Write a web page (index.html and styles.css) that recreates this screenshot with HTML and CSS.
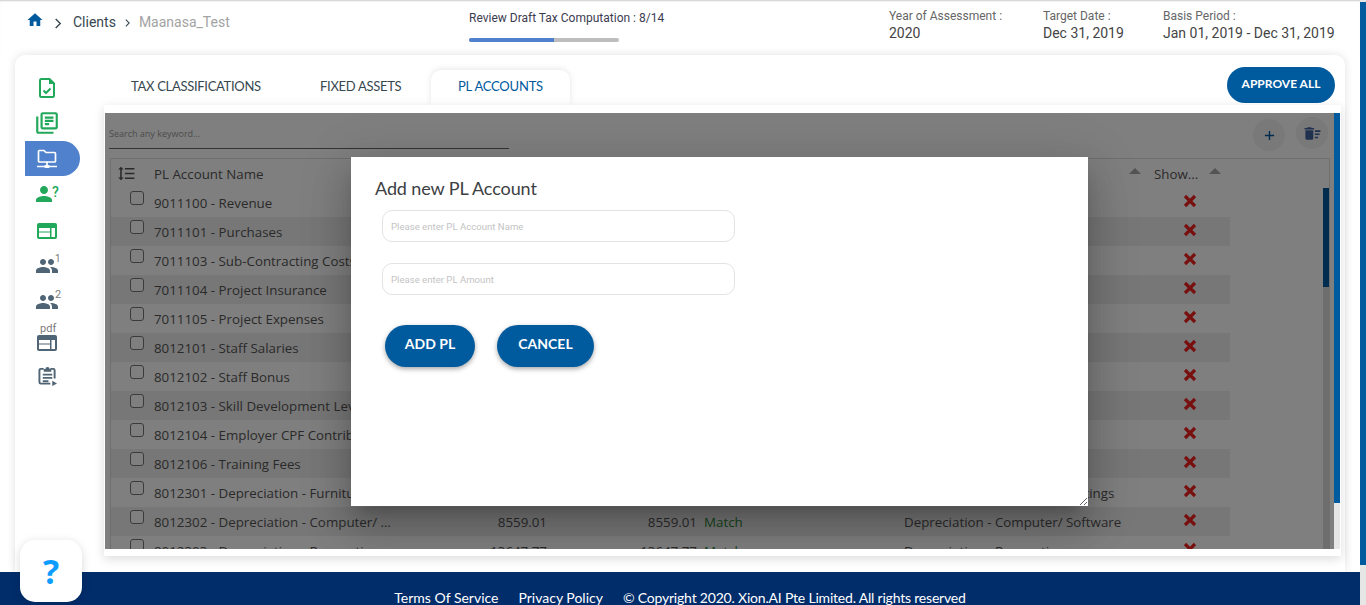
FILE: index.html
```html
<!DOCTYPE html>
<html lang="en">
<head>
<meta charset="utf-8">
<title>PL Accounts</title>
<link rel="stylesheet" href="styles.css">
</head>
<body>
<div class="app">
  <header class="topbar">
    <nav class="crumbs">
      <svg class="home" viewBox="0 0 24 24"><path d="M10 20v-6h4v6h5v-8h3L12 3 2 12h3v8z"/></svg>
      <svg class="chev big" viewBox="0 0 8 12"><path d="M1.5 1l5 5-5 5"/></svg>
      <span class="crumb">Clients</span>
      <svg class="chev small" viewBox="0 0 8 12"><path d="M1.5 1l5 5-5 5"/></svg>
      <span class="crumb muted">Maanasa_Test</span>
    </nav>
    <div class="progress">
      <div class="progress-label">Review Draft Tax Computation : 8/14</div>
      <div class="bar"><div class="bar-fill"></div></div>
    </div>
    <div class="meta m1"><div class="meta-label">Year of Assessment :</div><div class="meta-value">2020</div></div>
    <div class="meta m2"><div class="meta-label">Target Date :</div><div class="meta-value">Dec 31, 2019</div></div>
    <div class="meta m3"><div class="meta-label">Basis Period :</div><div class="meta-value">Jan 01, 2019 - Dec 31, 2019</div></div>
  </header>

  <main class="card">
    <aside class="sidebar">
      <div class="side-item">
        <svg class="ic-file" viewBox="0 0 16 20"><path class="g-stroke" d="M2.5 1h8L15 5.500V17.500a1.500 1.500 0 0 1-1.500 1.500h-11a1.500 1.500 0 0 1-1.500-1.500V2.500A1.500 1.500 0 0 1 2.500 1z"/><path class="g-fill" d="M10 1l5 5h-5z"/><path class="g-stroke" d="M4.500 12.500l2.500 2.500 4.500-4.500"/></svg>
      </div>
      <div class="side-item">
        <svg class="ic-books" viewBox="0 0 24 24"><path class="g-fill" d="M4 6H2v14c0 1.100.9 2 2 2h14v-2H4V6zm16-4H8c-1.100 0-2 .9-2 2v12c0 1.100.9 2 2 2h12c1.100 0 2-.9 2-2V4c0-1.100-.9-2-2-2zm0 14H8V4h12v12zM10 9h8v2h-8zm0 3h4v2h-4zm0-6h8v2h-8z"/></svg>
      </div>
      <div class="side-item active">
        <svg class="ic-net" viewBox="0 0 20 20"><path class="w-stroke" d="M2 1.500h5l2 2h8.500a1 1 0 0 1 1 1V12a1 1 0 0 1-1 1h-15a1 1 0 0 1-1-1V2.500a1 1 0 0 1 1-1z"/><path class="w-stroke" d="M10 13v3M0 17.500h20"/><rect class="w-fill" x="7.500" y="16" width="5" height="3" rx="1"/></svg>
      </div>
      <div class="side-item gap2">
        <svg class="ic-person" viewBox="4 4 16 16"><path class="g-fill" d="M12 12c2.210 0 4-1.790 4-4s-1.790-4-4-4-4 1.790-4 4 1.790 4 4 4zm0 2c-2.670 0-8 1.340-8 4v2h16v-2c0-2.660-5.330-4-8-4z"/></svg>
        <span class="sup green">?</span>
      </div>
      <div class="side-item">
        <svg class="ic-web" viewBox="0 0 20 16"><rect class="g-fill" width="20" height="16" rx="2"/><path class="w-fill" d="M2 5h11v3.500H2zM2 9.500h11V14H2zM14.500 5H18v9h-3.500z"/></svg>
      </div>
      <div class="side-item">
        <svg class="ic-people" viewBox="1 5 22 14"><path class="s-fill" d="M16 11c1.660 0 2.990-1.340 2.990-3S17.660 5 16 5c-1.660 0-3 1.340-3 3s1.340 3 3 3zm-8 0c1.660 0 2.990-1.340 2.990-3S9.660 5 8 5C6.340 5 5 6.340 5 8s1.340 3 3 3zm0 2c-2.330 0-7 1.170-7 3.500V19h14v-2.500c0-2.330-4.670-3.500-7-3.500zm8 0c-.29 0-.62.020-.97.050 1.160.84 1.970 1.970 1.970 3.450V19h6v-2.500c0-2.330-4.670-3.500-7-3.500z"/></svg>
        <span class="sup gray">1</span>
      </div>
      <div class="side-item second-team">
        <svg class="ic-people" viewBox="1 5 22 14"><path class="s-fill" d="M16 11c1.660 0 2.990-1.340 2.990-3S17.660 5 16 5c-1.660 0-3 1.340-3 3s1.340 3 3 3zm-8 0c1.660 0 2.990-1.340 2.990-3S9.660 5 8 5C6.340 5 5 6.340 5 8s1.340 3 3 3zm0 2c-2.330 0-7 1.170-7 3.500V19h14v-2.500c0-2.330-4.670-3.500-7-3.500zm8 0c-.29 0-.62.020-.97.050 1.160.84 1.970 1.970 1.970 3.450V19h6v-2.500c0-2.330-4.670-3.500-7-3.500z"/></svg>
        <span class="sup gray">2</span>
      </div>
      <div class="side-item pdf">
        <span class="pdf-label">pdf</span>
        <svg class="ic-web" viewBox="0 0 20 16"><rect class="s-fill" width="20" height="16" rx="2"/><path class="w-fill" d="M2 5h11v3.500H2zM2 9.500h11V14H2zM14.500 5H18v9h-3.500z"/></svg>
      </div>
      <div class="side-item last">
        <svg class="ic-clip" viewBox="0 0 20 21"><path class="s-stroke" d="M13 3h3a1.500 1.500 0 0 1 1.500 1.500V13M6 3H3A1.500 1.500 0 0 0 1.500 4.500V17A1.500 1.500 0 0 0 3 18.500h10"/><path class="s-fill" d="M6 3.200h1.800a2.200 2.200 0 0 1 4.400 0H14V6H6zM5 8h10v2H5zM5 11.500h10v2H5zM5 15h6v2H5zM15 15.500l5 3-5 2.500z"/></svg>
      </div>
    </aside>

    <section class="content">
      <div class="tabbar">
        <span class="tab t1">TAX CLASSIFICATIONS</span>
        <span class="tab t2">FIXED ASSETS</span>
        <span class="tab active">PL ACCOUNTS</span>
        <button class="approve">APPROVE ALL</button>
      </div>

      <div class="sheet">
        <div class="pane">
          <div class="toolbar">
            <div class="search">Search any keyword...</div>
            <span class="round plus"><svg viewBox="0 0 12 12"><path d="M6 1v10M1 6h10"/></svg></span>
            <span class="round bin"><svg viewBox="0 0 24 24"><path d="M15 16h4v2h-4zm0-8h7v2h-7zm0 4h6v2h-6zM3 18c0 1.100.9 2 2 2h6c1.100 0 2-.9 2-2V8H3v10zM14 5h-3l-1-1H6L5 5H2v2h12z"/></svg></span>
          </div>
          <div class="tablebox">
            <div class="thead">
              <svg class="sorter" viewBox="0 0 24 24"><path d="M6 7h2.500L5 3.500 1.500 7H4v10H1.500L5 20.500 8.500 17H6V7zm4-2v2h12V5H10zm0 14h12v-2H10v2zm0-6h12v-2H10v2z"/></svg>
              <span class="th-name">PL Account Name</span>
              <span class="tri"></span>
              <span class="th-show">Show...</span>
              <span class="tri"></span>
            </div>
            <div class="tbody">
              <div class="rows">
                <div class="row"><span class="check"></span><span class="name">9011100 - Revenue</span><svg class="x" viewBox="0 0 14 14"><path d="M2 2l10 10M12 2L2 12"/></svg></div>
                <div class="row"><span class="check"></span><span class="name">7011101 - Purchases</span><svg class="x" viewBox="0 0 14 14"><path d="M2 2l10 10M12 2L2 12"/></svg></div>
                <div class="row"><span class="check"></span><span class="name">7011103 - Sub-Contracting Costs</span><svg class="x" viewBox="0 0 14 14"><path d="M2 2l10 10M12 2L2 12"/></svg></div>
                <div class="row"><span class="check"></span><span class="name">7011104 - Project Insurance</span><svg class="x" viewBox="0 0 14 14"><path d="M2 2l10 10M12 2L2 12"/></svg></div>
                <div class="row"><span class="check"></span><span class="name">7011105 - Project Expenses</span><svg class="x" viewBox="0 0 14 14"><path d="M2 2l10 10M12 2L2 12"/></svg></div>
                <div class="row"><span class="check"></span><span class="name">8012101 - Staff Salaries</span><svg class="x" viewBox="0 0 14 14"><path d="M2 2l10 10M12 2L2 12"/></svg></div>
                <div class="row"><span class="check"></span><span class="name">8012102 - Staff Bonus</span><svg class="x" viewBox="0 0 14 14"><path d="M2 2l10 10M12 2L2 12"/></svg></div>
                <div class="row"><span class="check"></span><span class="name">8012103 - Skill Development Levy</span><svg class="x" viewBox="0 0 14 14"><path d="M2 2l10 10M12 2L2 12"/></svg></div>
                <div class="row"><span class="check"></span><span class="name">8012104 - Employer CPF Contribution</span><svg class="x" viewBox="0 0 14 14"><path d="M2 2l10 10M12 2L2 12"/></svg></div>
                <div class="row"><span class="check"></span><span class="name">8012106 - Training Fees</span><svg class="x" viewBox="0 0 14 14"><path d="M2 2l10 10M12 2L2 12"/></svg></div>
                <div class="row"><span class="check"></span><span class="name">8012301 - Depreciation - Furniture &amp; Fittings</span><span class="num"></span><span class="num n2"></span><span class="status"></span><span class="cls">Depreciation - Furniture &amp; Fittings</span><svg class="x" viewBox="0 0 14 14"><path d="M2 2l10 10M12 2L2 12"/></svg></div>
                <div class="row"><span class="check"></span><span class="name">8012302 - Depreciation - Computer/ Software</span><span class="num">8559.01</span><span class="num n2">8559.01</span><span class="status">Match</span><span class="cls">Depreciation - Computer/ Software</span><svg class="x" viewBox="0 0 14 14"><path d="M2 2l10 10M12 2L2 12"/></svg></div>
                <div class="row"><span class="check"></span><span class="name">8012303 - Depreciation - Renovation</span><span class="num">13647.77</span><span class="num n2">13647.77</span><span class="status">Match</span><span class="cls">Depreciation - Renovation</span><svg class="x" viewBox="0 0 14 14"><path d="M2 2l10 10M12 2L2 12"/></svg></div>
              </div>
              <div class="inner-scroll"><div class="inner-thumb"></div></div>
            </div>
          </div>

          <div class="dim">
            <div class="dialog">
              <h2 class="dialog-title">Add new PL Account</h2>
              <div class="field">Please enter PL Account Name</div>
              <div class="field second">Please enter PL Amount</div>
              <div class="actions">
                <button class="pill add">ADD PL</button>
                <button class="pill cancel">CANCEL</button>
              </div>
            </div>
          </div>
        </div>
        <div class="sheet-scroll"><div class="sheet-thumb"></div></div>
      </div>
    </section>
  </main>

  <footer class="footer">
    <span>Terms Of Service</span>
    <span>Privacy Policy</span>
    <span class="copy">© Copyright 2020. Xion.AI Pte Limited. All rights reserved</span>
  </footer>
</div>
<div class="page-scroll"><div class="page-thumb"></div></div>
<button class="help">?</button>
</body>
</html>
```

FILE: styles.css
```css
* { box-sizing: border-box; }
html, body { height: 605px; }
body {
  margin: 0;
  display: flex;
  overflow: hidden;
  position: relative;
  background: #fff;
  font-family: Roboto, sans-serif;
  color: #444;
}
.app { width: 1360px; height: 605px; display: flex; flex-direction: column; }

/* top bar */
.topbar {
  height: 55px;
  flex: none;
  display: flex;
  box-shadow: inset 0 2px 2px -1px #ccc;
}
.crumbs { width: 469px; padding: 11px 0 0 27px; display: flex; align-items: flex-start; }
.home { width: 18px; height: 18px; margin-left: -1px; fill: #005a9e; }
.chev { fill: none; stroke: #37474f; stroke-width: 1.6; }
.chev.big { width: 8px; height: 11px; margin: 7px 11px 0 10px; stroke-width: 1.500; }
.chev.small { width: 7px; height: 8px; margin: 8px 8px 0 8px; }
.crumb { font-size: 14px; line-height: 22px; color: #37474f; }
.crumb.muted { color: #a3a3a3; }
.progress { width: 420px; padding-top: 11px; }
.progress-label { font-size: 12px; line-height: 15px; color: #3c3c50; }
.bar { width: 150px; height: 4px; margin-top: 12px; border-radius: 2px; background: #bdbdbd; overflow: hidden; }
.bar-fill { width: 85px; height: 4px; background: #4f81cc; }
.meta { padding-top: 9px; }
.m1 { width: 154px; }
.m2 { width: 120px; }
.m3 { flex: 1; }
.meta-label { font-size: 12px; line-height: 15px; color: #666; }
.meta-value { font-size: 14px; line-height: 18px; color: #444; }

/* card */
.card {
  height: 517px;
  flex: none;
  margin: 0 15px;
  display: flex;
  background: #fff;
  border-radius: 10px 10px 0 0;
  box-shadow: 0 0 10px rgba(0,0,0,.12);
}
.sidebar { width: 89px; flex: none; padding: 15px 0 0 10px; display: flex; flex-direction: column; }
.side-item { width: 55px; height: 35px; flex: none; display: flex; align-items: center; justify-content: flex-start; position: relative; }
.side-item.active { margin-top: 1px; background: #4f81cc; border-radius: 0 18px 18px 0; }
.side-item.gap2 { margin-top: 2px; }
.side-item.pdf { height: 34px; flex-direction: column; align-items: flex-start; padding-top: 5px; }
.side-item.last { margin-top: 6px; }
.g-fill { fill: #21a85a; }
.g-stroke { fill: none; stroke: #21a85a; stroke-width: 2; }
.w-fill { fill: #fff; }
.w-stroke { fill: none; stroke: #fff; stroke-width: 1.700; }
.s-fill { fill: #4f6475; }
.s-stroke { fill: none; stroke: #4f6475; stroke-width: 2; }
.ic-file { width: 16px; height: 20px; margin-left: 14px; }
.ic-books { width: 26px; height: 26px; margin-left: 9px; }
.ic-net { width: 20px; height: 20px; margin-left: 12px; }
.ic-person { width: 16px; height: 16px; margin: -3px 0 0 11px; }
.ic-web { width: 20px; height: 16px; margin-left: 12px; flex: none; }
.ic-people { width: 22px; height: 14px; margin-left: 11px; }
.second-team .ic-people { margin-top: 2px; }
.ic-clip { width: 19px; height: 20px; margin-left: 13px; }
.sup { position: absolute; font-size: 11px; line-height: 12px; }
.sup.green { left: 27px; top: 8px; color: #21a85a; font-size: 14px; font-weight: 500; }
.sup.gray { left: 30px; top: 5px; color: #7a7a7a; font-size: 10px; }
.second-team .sup.gray { top: 6px; font-size: 11px; }
.pdf-label { font-size: 11px; line-height: 12px; color: #7a7a7a; margin-left: 15px; }

/* content */
.content { flex: 1; min-width: 0; padding-right: 4px; display: flex; flex-direction: column; }
.tabbar { height: 50px; flex: none; position: relative; display: flex; align-items: flex-start; }
.tab { font-family: Lato, sans-serif; font-size: 13px; line-height: 18px; letter-spacing: -.3px; color: #37474f; padding-top: 22px; white-space: nowrap; }
.t1 { margin-left: 27px; width: 189px; }
.t2 { width: 111px; }
.tab.active {
  width: 139px;
  height: 35px;
  margin-top: 15px;
  padding: 7px 0 0 27px;
  letter-spacing: -.2px;
  color: #005a9e;
  background: #fff;
  border-radius: 10px 10px 0 0;
  box-shadow: 0 -1px 6px rgba(0,0,0,.1);
}
.approve {
  width: 108px;
  height: 36px;
  margin: 12px 6px 0 auto;
  padding: 0 0 3px;
  border: 0;
  border-radius: 18px;
  background: #005a9e;
  color: #fff;
  font-family: Lato, sans-serif;
  font-size: 12px;
  font-weight: 700;
}
.sheet {
  height: 451px;
  flex: none;
  padding: 8px 1px 7px 1px;
  display: flex;
  position: relative;
  background: #fff;
  box-shadow: 0 3px 10px rgba(0,0,0,.14);
}
.pane { width: 1229px; position: relative; overflow: hidden; background: #fff; font-family: "Open Sans", sans-serif; color: #555; }
.sheet-scroll { width: 6px; background: #e6e6e6; }
.sheet-thumb { height: 390px; background: #005a9e; }

.toolbar { height: 45px; padding-left: 4px; position: relative; }
.search { width: 400px; height: 36px; padding-top: 14px; font-size: 9px; line-height: 13px; color: #999; border-bottom: 1px solid #666; }
.round { position: absolute; width: 32px; height: 32px; border-radius: 50%; background: #f2f2f2; display: flex; align-items: center; justify-content: center; }
.plus { left: 1148px; top: 6px; }
.plus svg { width: 11px; height: 11px; fill: none; stroke: #005a9e; stroke-width: 1.500; }
.bin { left: 1191px; top: 4px; }
.bin svg { width: 19px; height: 19px; fill: #41639e; }

.tablebox { margin: 0 4px 0 5px; height: 391px; border: 1px solid #dcdcdc; border-bottom: 0; }
.thead { height: 29px; display: flex; align-items: center; font-size: 13.33px; }
.sorter { width: 19px; height: 19px; margin: 0 18px 0 6px; fill: #555; }
.th-name { width: 975px; }
.tri { width: 0; height: 0; border-left: 6px solid transparent; border-right: 6px solid transparent; border-bottom: 6px solid #a8a8a8; margin-top: -5px; }
.th-show { width: 55px; margin-left: 13px; }
.tbody { display: flex; height: 361px; overflow: hidden; }
.rows { width: 1119px; flex: none; }
.row { height: 29px; display: flex; align-items: center; padding: 0 33px 0 19px; font-size: 13.33px; background: #fff; }
.row:nth-child(even) { background: #eee; }
.check { width: 14px; height: 14px; flex: none; margin: -9px 10px 0 0; border: 1.500px solid #777; border-radius: 3px; background: #fff; }
.name { width: 241px; flex: none; overflow: hidden; text-overflow: ellipsis; white-space: nowrap; }
.num { width: 152px; flex: none; text-align: right; }
.num.n2 { width: 150px; }
.status { width: 207px; flex: none; padding-left: 7px; color: #2e8b3a; }
.cls { white-space: nowrap; }
.x { width: 14px; height: 14px; flex: none; margin: -4px 0 0 auto; fill: none; stroke: #f02020; stroke-width: 3.200; }
.inner-scroll { width: 6px; margin-left: auto; background: #dcdcdc; }
.inner-thumb { height: 99px; background: #005a9e; }

.dim { position: absolute; inset: 0; overflow: hidden; background: rgba(0,0,0,.5); }
.dialog {
  position: absolute;
  left: 246px;
  top: 44px;
  width: 737px;
  height: 349px;
  padding: 20px 24px;
  overflow: auto;
  resize: both;
  background: #fff;
  font-family: Lato, sans-serif;
  box-shadow: 0 11px 15px -7px rgba(0,0,0,.2), 0 24px 38px 3px rgba(0,0,0,.14), 0 9px 46px 8px rgba(0,0,0,.12);
}
.dialog-title { margin: 0; font-size: 18px; line-height: 22px; letter-spacing: -.1px; font-weight: 400; color: #3c4043; }
.field {
  width: 353px;
  height: 32px;
  margin: 11px 0 0 7px;
  padding-left: 8px;
  border: 1px solid #e3e3e3;
  border-radius: 10px;
  font-family: Roboto, sans-serif;
  font-size: 9.6px;
  line-height: 32px;
  color: #c4c4c4;
}
.field.second { margin-top: 21px; }
.actions { display: flex; gap: 22px; margin: 30px 0 0 10px; }
.pill {
  height: 42px;
  padding: 0 0 5px;
  border: 0;
  border-radius: 21px;
  background: #005a9e;
  color: #fff;
  font-family: Lato, sans-serif;
  font-size: 14px;
  font-weight: 700;
  box-shadow: 0 2px 5px rgba(0,0,0,.35);
}
.add { width: 90px; }
.cancel { width: 97px; }

/* footer */
.footer {
  height: 33px;
  flex: none;
  padding-top: 17px;
  display: flex;
  justify-content: center;
  gap: 20px;
  background: #012d6b;
  color: #fff;
  font-family: Lato, sans-serif;
  font-size: 14px;
  line-height: 18px;
  white-space: nowrap;
}
.copy { letter-spacing: -.2px; }

.page-scroll { width: 6px; height: 605px; flex: none; padding-top: 2px; background: #e6e6e6; }
.page-thumb { height: 563px; background: #005a9e; }

.help {
  position: absolute;
  left: 20px;
  top: 540px;
  width: 62px;
  height: 62px;
  padding: 0;
  border: 0;
  border-radius: 15px;
  background: #fff;
  box-shadow: 0 2px 10px rgba(0,0,0,.15);
  color: #0a9dff;
  font-family: "Open Sans", sans-serif;
  font-size: 34px;
  font-weight: 700;
}
```
